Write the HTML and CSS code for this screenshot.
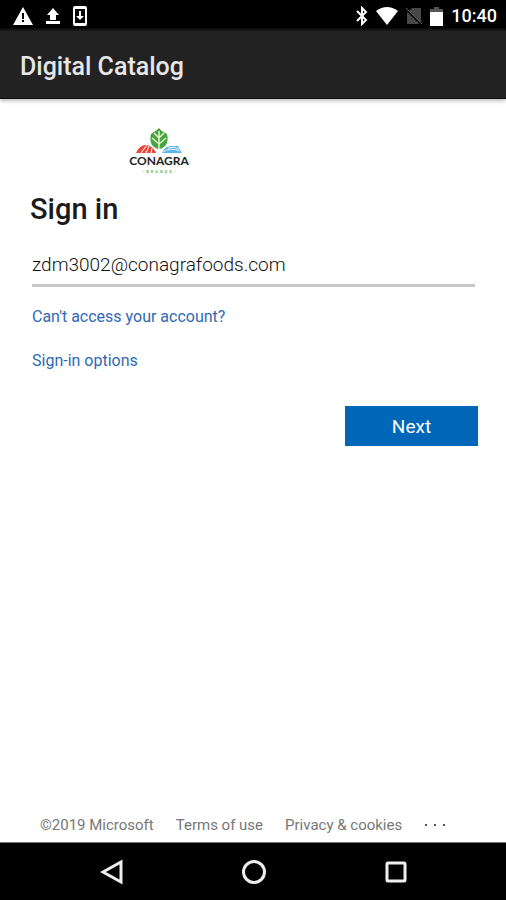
FILE: index.html
```html
<!DOCTYPE html>
<html lang="en">
<head>
<meta charset="utf-8">
<meta name="viewport" content="width=device-width, initial-scale=1">
<title>Digital Catalog</title>
<link rel="stylesheet" href="styles.css">
</head>
<body>
<div class="status">
  <div class="status-group status-left">
    <svg width="20" height="18" viewBox="0 0 20 18" aria-hidden="true"><path d="M10 0 20 18H0Z" fill="#fff"/><path d="M9 6h2v6H9zM9 13h2v2H9z" fill="#000"/></svg>
    <svg width="14" height="18" viewBox="0 0 14 18" aria-hidden="true"><path d="M7 1 13 8H10V13H4V8H1ZM0 14h14v3H0z" fill="#fff"/></svg>
    <svg width="14" height="20" viewBox="0 0 14 20" aria-hidden="true"><rect width="14" height="20" rx="2" fill="#fff"/><path d="M2 3h10v14H2z" fill="#000"/><path d="M6 5h2v5h3l-4 4-4-4h3z" fill="#fff"/></svg>
  </div>
  <div class="status-group status-right">
    <svg width="12" height="20" viewBox="0 0 12 20" aria-hidden="true"><path d="M1 5 10 14 6 18V2L10 6 1 15" fill="none" stroke="#fff" stroke-width="2"/></svg>
    <svg width="22" height="18" viewBox="0 0 22 18" aria-hidden="true"><path d="M0 4Q11-4 22 4L11 18Z" fill="#fff"/></svg>
    <svg width="16" height="18" viewBox="0 0 16 18" aria-hidden="true"><path d="M6 1H15V17H1V6Z" fill="#484848"/><path d="M0 2 16 18" stroke="#000" stroke-width="2"/><path d="M0 1 16 17" stroke="#666" stroke-width="1"/></svg>
    <svg width="13" height="19" viewBox="0 0 13 19" aria-hidden="true"><path d="M4 0h5v2h4v4H0V2h4z" fill="#555"/><path d="M0 5h13v14H0z" fill="#fff"/></svg>
    <time class="clock">10:40</time>
  </div>
</div>
<header class="app-bar"><span class="app-title">Digital Catalog</span></header>
<main class="page">
  <svg class="logo" width="64" height="46" viewBox="0 0 64 46" role="img" aria-label="Conagra Brands">
    <path d="M32 0C29 3 26 4 24 6C22 14 25 20 32 21C39 20 42 14 40 6C37 4 34 3 32 0Z" fill="#48a442"/>
    <path d="M32 3V21M32 10 27 5M32 10 37 5M32 16 25 10M32 16 39 10" stroke="#e6f3ca" stroke-width="1.5" fill="none"/>
    <path d="M9 25Q13 16 20 17Q26 18 29 25Z" fill="#e8493a"/>
    <path d="M14 25 20 17M19 25 22 18M24 25 25 20" stroke="#fff" stroke-width="1"/>
    <path d="M35 25Q38 18 44 18H51L55 25Z" fill="#5eb5e3"/>
    <path d="M36 24Q43 19 53 23M41 20Q47 18 52 21" stroke="#e5f5ff" stroke-width="1" fill="none"/>
    <text class="logo-name" x="32" y="37" text-anchor="middle">CONAGRA</text>
    <text class="logo-sub" x="32" y="45" text-anchor="middle">•  B  R  A  N  D  S  •</text>
  </svg>
  <form class="sign-in">
    <h1 class="heading">Sign in</h1>
    <input class="email" type="email" aria-label="Email" value="zdm3002@conagrafoods.com">
    <a class="link" href="#account">Can't access your account?</a>
    <a class="link" href="#options">Sign-in options</a>
    <button class="next" type="button">Next</button>
  </form>
  <footer class="footer">
    <span>©2019 Microsoft</span>
    <a href="#terms">Terms of use</a>
    <a href="#privacy">Privacy &amp; cookies</a>
    <button class="more" type="button" aria-label="More"><svg width="22" height="4" viewBox="0 0 22 4" aria-hidden="true"><path d="M1 1h2v2H1zM10 1h2v2h-2zM19 1h2v2h-2z" fill="#555"/></svg></button>
  </footer>
</main>
<nav class="nav" aria-label="System">
  <button type="button" aria-label="Back"><svg width="24" height="26" viewBox="0 0 24 26"><path d="M21 3V23L3 13Z"/></svg></button>
  <button type="button" aria-label="Home"><svg width="26" height="26" viewBox="0 0 26 26"><circle cx="13" cy="13" r="10.5"/></svg></button>
  <button type="button" aria-label="Recent apps"><svg width="24" height="26" viewBox="0 0 24 26"><rect x="3" y="4" width="18" height="18" rx="1"/></svg></button>
</nav>
</body>
</html>
```
FILE: styles.css
```css
* { box-sizing: border-box; }
body {
  margin: 0;
  min-height: 100vh;
  display: flex;
  flex-direction: column;
  background: #fff;
  font-family: Roboto, "Liberation Sans", sans-serif;
  color: #1b1b1b;
}
button { border: 0; padding: 0; background: none; font-family: inherit; }
a { text-decoration: none; }
svg { display: block; }
.status {
  height: 30px;
  padding: 2px 9px 0 13px;
  display: flex;
  justify-content: space-between;
  align-items: center;
  background: #000;
}
.status-group { display: flex; align-items: center; }
.status-left { gap: 13px; }
.status-right { gap: 8px; }
.clock { color: #fff; font-size: 18px; font-weight: 500; line-height: 20px; }
.app-bar {
  height: 69px;
  padding: 4px 20px 0;
  display: flex;
  align-items: center;
  background: #222;
  border-top: 1px solid #161616;
  border-bottom: 1px solid #0c0c0c;
  box-shadow: 0 2px 4px #bbb;
}
.app-title { color: #e6e6e6; font-size: 25px; font-weight: 500; line-height: 32px; }
.page {
  flex: 1;
  display: flex;
  flex-direction: column;
  padding: 29px 28px 7px 32px;
}
.logo { margin-left: 95px; }
.logo-name { font-family: Lato, sans-serif; font-size: 12px; font-weight: 700; fill: #222; }
.logo-sub { font-size: 4px; font-weight: 700; fill: #6cbb60; white-space: pre; }
.sign-in { display: flex; flex-direction: column; align-items: flex-start; }
.heading { margin: 16px 0 26px -2px; font-size: 29px; font-weight: 500; line-height: 38px; }
.email {
  width: calc(100% - 3px);
  height: 33px;
  padding: 0 0 10px;
  border: 0;
  border-bottom: 3px solid #c8c8c8;
  border-radius: 0;
  outline: 0;
  background: none;
  font-family: inherit;
  font-size: 19px;
  font-weight: 300;
  color: #111;
}
.link { margin-top: 20px; font-size: 16px; line-height: 24px; color: #2f69b3; }
.link:first-of-type { margin-top: 18px; }
.next {
  align-self: flex-end;
  width: 133px;
  height: 40px;
  margin-top: 33px;
  background: #0067b8;
  color: #fff;
  font-size: 19px;
}
.footer {
  margin-top: auto;
  padding-left: 8px;
  display: flex;
  align-items: center;
  gap: 22px;
  font-size: 15px;
  line-height: 20px;
  color: #777;
}
.footer a { color: inherit; }
.nav {
  height: 58px;
  padding: 0 39px 0 41px;
  display: flex;
  align-items: center;
  background: #000;
  border-top: 1px solid #777;
}
.nav button { flex: 1; display: flex; justify-content: center; }
.nav svg { fill: none; stroke: #eee; stroke-width: 3; }
```
